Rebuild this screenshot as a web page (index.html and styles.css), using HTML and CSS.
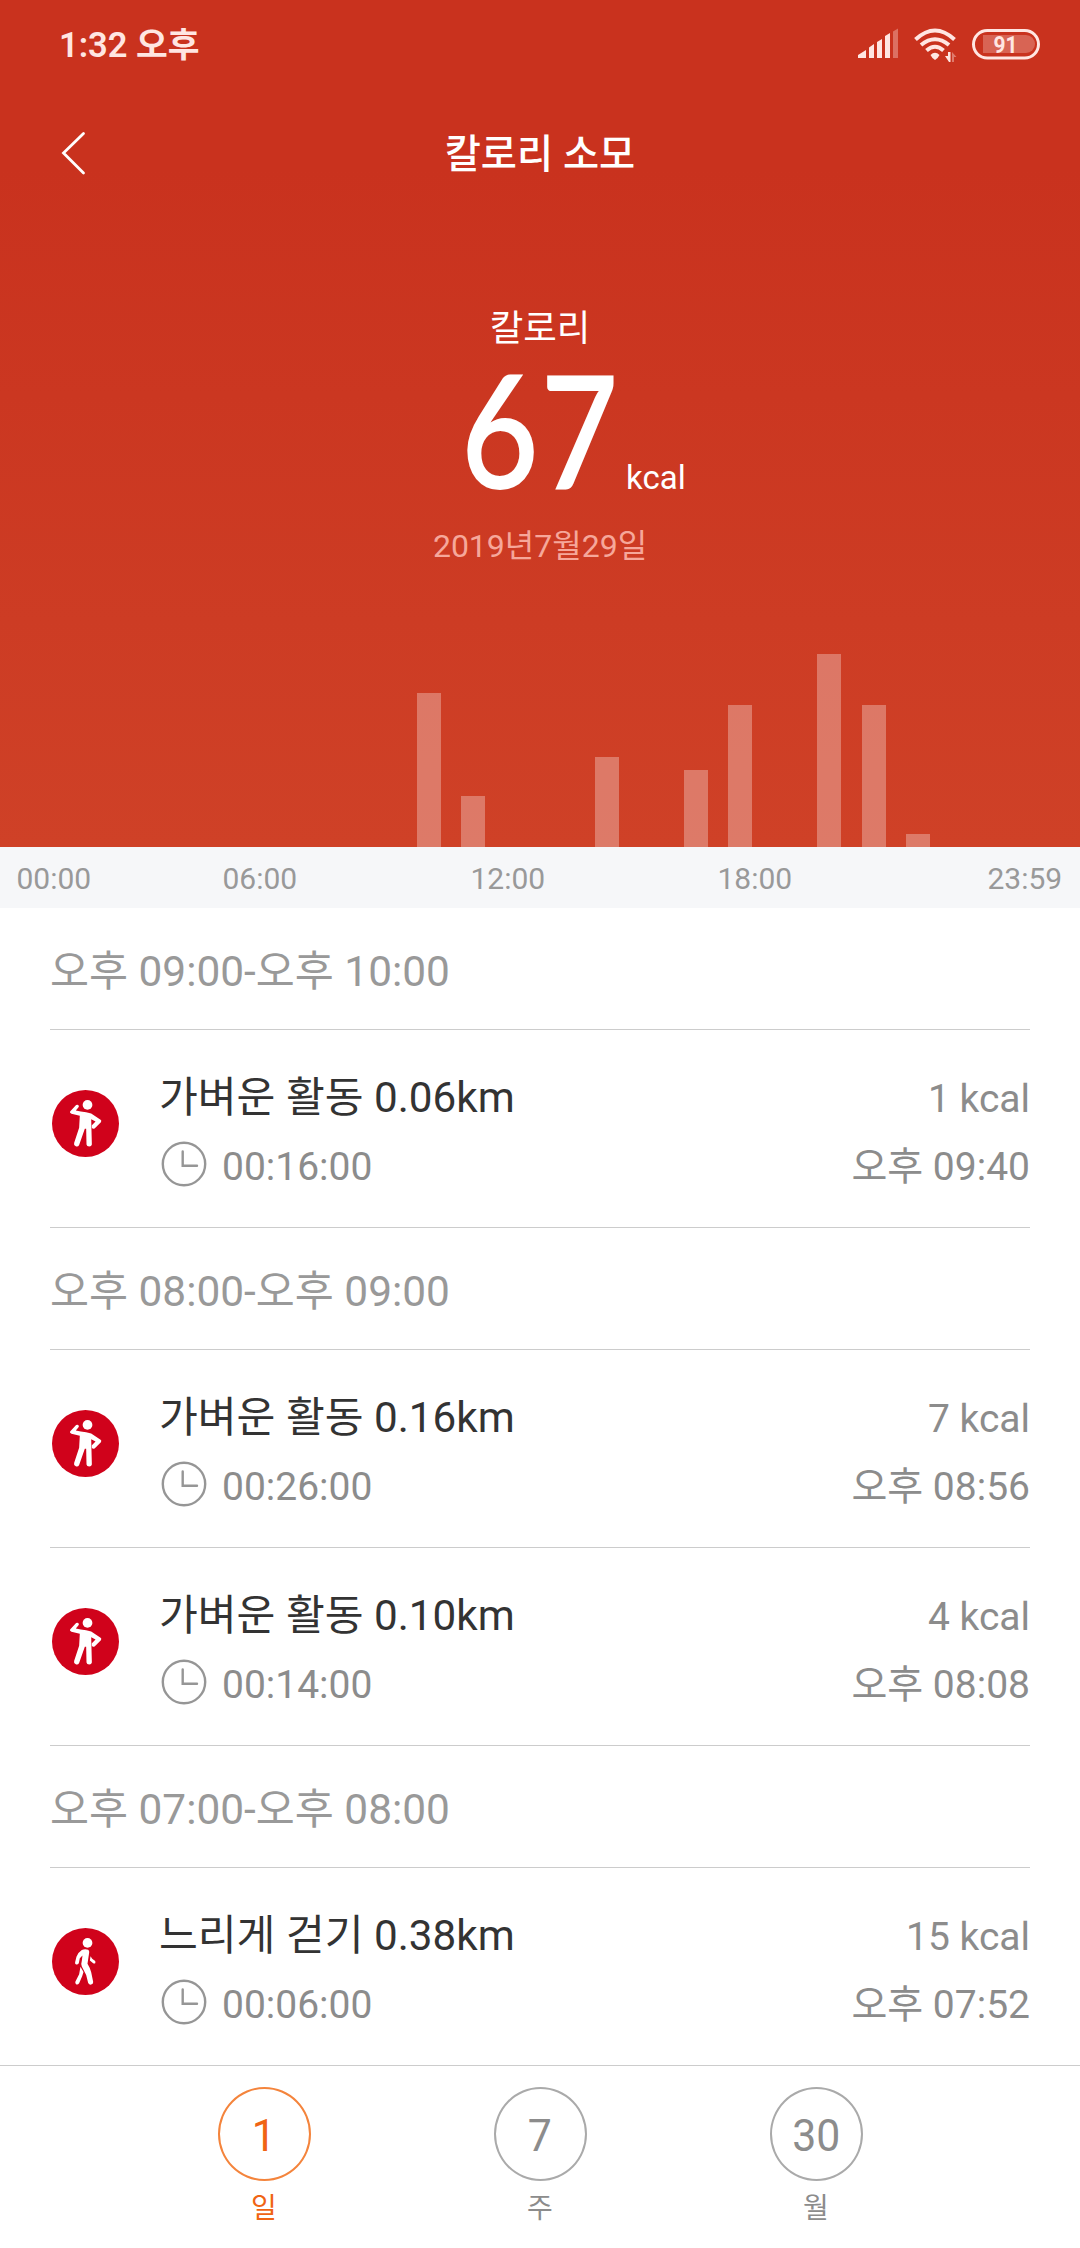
FILE: index.html
```html
<!DOCTYPE html>
<html lang="ko">
<head>
<meta charset="utf-8">
<title>칼로리 소모</title>
<link rel="stylesheet" href="styles.css">
</head>
<body>
<svg class="defs" width="0" height="0" aria-hidden="true">
  <symbol id="stand" viewBox="68 92 200 200">
    <circle cx="168" cy="192" r="100" fill="#d0021b"/>
    <circle cx="174" cy="136.500" r="14.500" fill="#fff"/>
    <path fill="#fff" d="M122 156L140 137Q145 134 148 139Q149 142 146 145L139 153L154 156Q170 157 185 162L213 181Q217 184 214 188L196 206Q190 210 187 205V197L198 186L185 179L187 255Q186 261 179 261Q172 261 171 255L170 208H166L149 256Q146 262 139 260Q132 257 134 250L149 205L151 169L126 163Q120 160 122 156Z"/>
  </symbol>
  <symbol id="walk" viewBox="68 86 200 200">
    <circle cx="168" cy="186" r="100" fill="#d0021b"/>
    <circle cx="174" cy="130.500" r="14.500" fill="#fff"/>
    <path fill="#fff" d="M157 152Q166 147 176 151Q180 154 179 159L174 193Q182 206 185 218L191 247Q191 254 185 255Q179 256 176 250L170 226L157 201Q154 193 157 184L159 168L151 176L148 191Q145 196 140 195Q136 194 137 188L141 172Q146 159 157 152Z"/>
    <path fill="#fff" d="M153 202L162 217L158 230L149 251Q145 256 140 254Q136 251 138 246L149 224ZM183 170L188 178L196 184Q199 187 197 191Q194 193 191 191L181 183Z"/>
  </symbol>
  <symbol id="clock" viewBox="0 0 46 46">
    <g fill="none" stroke="#969696" stroke-width="2.400" stroke-linecap="round"><circle cx="23" cy="23" r="21.200"/><path d="M21.700 10.500V24.700H36"/></g>
  </symbol>
</svg>
<div class="screen">
  <header class="hero">
    <div class="status">
      <span class="status-time">1:32 오후</span>
      <svg class="status-icons" viewBox="0 0 184 36" width="184" height="36">
        <g fill="#ffe6e2">
          <path d="M0 31V28L8 23V31ZM11 31V20.500L16 17V31ZM19 31V15L24 12V31ZM27 31V9L32 6V31Z"/>
          <path opacity=".35" d="M35 31V4.500L40 1.500V31Z"/>
          <path d="M72.500 28Q77 23.500 81.500 28Q80.500 30.500 77 33Q73.500 30.500 72.500 28Z"/>
          <path d="M87 29H90V25H92.500V35H91Z"/>
          <path opacity=".4" d="M94 25V35H96V30H98.500Z"/>
        </g>
        <g fill="none" stroke="#ffe6e2" stroke-width="4">
          <path d="M57.500 12.500Q77 -5.500 96.500 12.500M63 18Q77 6.500 91 18M68.500 23.500Q77 16 85.500 23.500"/>
        </g>
        <path d="M125 8H168A9 9 0 0 1 168 26H125Z" fill="#ffe6e2" opacity=".28"/>
        <rect x="115.500" y="3.500" width="65" height="27.500" rx="13.750" fill="none" stroke="#ffe6e2" stroke-width="3"/>
        <text class="battery-text" x="147.500" y="25.800" text-anchor="middle" textLength="24" lengthAdjust="spacingAndGlyphs">91</text>
      </svg>
    </div>
    <nav class="titlebar">
      <svg class="back" viewBox="0 0 26 44" width="26" height="44"><path d="M23.500 2.500L3.500 22L23.500 42" fill="none" stroke="#fff" stroke-width="2.800" stroke-linecap="round"/></svg>
      <h1>칼로리 소모</h1>
    </nav>
    <div class="label">칼로리</div>
    <div class="total"><span></span><b>67</b><span class="unit">kcal</span></div>
    <div class="date">2019년7월29일</div>
    <div class="chart">
      <i></i><i></i><i></i><i></i><i></i><i></i><i></i><i></i><i></i>
      <i style="height:154.500px"></i><i style="height:51.500px"></i><i></i><i></i>
      <i style="height:90px"></i><i></i><i style="height:77.300px"></i><i style="height:141.700px"></i><i></i>
      <i style="height:193px"></i><i style="height:141.700px"></i><i style="height:13px"></i><i></i><i></i><i></i>
    </div>
  </header>
  <div class="axis"><span>00:00</span><span>06:00</span><span>12:00</span><span>18:00</span><span>23:59</span></div>
  <main class="list">
    <h2>오후 09:00-오후 10:00</h2>
    <article class="row"><svg class="act"><use href="#stand"/></svg><div class="info"><div class="name">가벼운 활동 0.06km</div><div class="dur"><svg class="clock"><use href="#clock"/></svg>00:16:00</div></div><div class="meta"><div>1 kcal</div><div>오후 09:40</div></div></article>
    <h2>오후 08:00-오후 09:00</h2>
    <article class="row"><svg class="act"><use href="#stand"/></svg><div class="info"><div class="name">가벼운 활동 0.16km</div><div class="dur"><svg class="clock"><use href="#clock"/></svg>00:26:00</div></div><div class="meta"><div>7 kcal</div><div>오후 08:56</div></div></article>
    <article class="row"><svg class="act"><use href="#stand"/></svg><div class="info"><div class="name">가벼운 활동 0.10km</div><div class="dur"><svg class="clock"><use href="#clock"/></svg>00:14:00</div></div><div class="meta"><div>4 kcal</div><div>오후 08:08</div></div></article>
    <h2>오후 07:00-오후 08:00</h2>
    <article class="row last"><svg class="act"><use href="#walk"/></svg><div class="info"><div class="name">느리게 걷기 0.38km</div><div class="dur"><svg class="clock"><use href="#clock"/></svg>00:06:00</div></div><div class="meta"><div>15 kcal</div><div>오후 07:52</div></div></article>
  </main>
  <footer class="tabs">
    <div class="tab active"><div class="ring"><span>1</span></div>일</div>
    <div class="tab"><div class="ring"><span>7</span></div>주</div>
    <div class="tab"><div class="ring"><span>30</span></div>월</div>
  </footer>
</div>
</body>
</html>
```
FILE: styles.css
```css
* { box-sizing: border-box; }
body { margin: 0; font-family: Roboto, "Noto Sans CJK KR", sans-serif; background: #fff; }
h1, h2 { margin: 0; }
.defs { display: block; position: absolute; }
.screen { width: 1080px; height: 2248px; display: flex; flex-direction: column; overflow: hidden; }

.hero { height: 847px; display: flex; flex-direction: column; background: linear-gradient(#c9321e 20%, #cf4127); color: #fff; }
.status { height: 88px; display: flex; justify-content: space-between; align-items: center; padding: 1px 38px 0 59px; color: #ffe6e2; }
.status-time { padding-top: 1px; font-size: 34.500px; font-weight: 600; line-height: 40px; }
.battery-text { font: 700 24px Roboto, sans-serif; fill: #ffe6e2; }
.titlebar { height: 130px; display: grid; grid-template-columns: 60px 1fr 60px; align-items: center; padding: 0 60px; }
.titlebar h1 { padding-top: 4px; font-size: 39.300px; font-weight: 500; line-height: 60px; text-align: center; }
.label { margin-top: 83px; font-size: 36.500px; line-height: 56px; text-align: center; }
.total { height: 148px; display: grid; grid-template-columns: 1fr 160px 1fr; align-items: baseline; margin-top: -4px; }
.total b { font: 600 158px/150px Lato, sans-serif; letter-spacing: 2px; transform: translateX(-11px) scaleX(.85); }
.unit { font-size: 33px; padding-left: 6px; }
.date { margin-top: 20px; font-size: 32px; line-height: 50px; text-align: center; color: #f6a79a; }
.chart { flex: 1; display: grid; grid-template-columns: repeat(24, 1fr); align-items: end; justify-items: center; padding: 0 6px; }
.chart i { width: 23.700px; background: rgba(255, 255, 255, .3); }

.axis { height: 61px; display: grid; grid-template-columns: 206px 248px 247px 270px auto; padding-left: 16.500px; background: #f6f7f9; color: #999; font-size: 30px; line-height: 63px; }

.list { height: 1157px; padding: 0 50px; background: #fff; }
.list h2 { height: 122px; border-bottom: 1px solid #ccc; padding-top: 4px; font-size: 42.400px; font-weight: 400; line-height: 120px; color: #999; }
.row { height: 198px; display: flex; border-bottom: 1px solid #ccc; padding: 38px 0 0 2px; color: #8c8c8c; font-size: 39px; line-height: 60px; }
.row.last { border-bottom: 0; }
.act { width: 67px; height: 67px; margin: 22px 40px 0 0; }
.info { flex: 1; display: grid; gap: 9px; align-content: start; }
.name { color: #333; font-size: 42.200px; }
.dur { display: flex; align-items: center; }
.clock { width: 46px; height: 46px; margin: -6px 15px 0 2px; }
.meta { display: grid; gap: 8px; align-content: start; padding-top: 1px; text-align: right; }

.tabs { flex: 1; display: flex; justify-content: center; gap: 183px; border-top: 1px solid #ccc; padding-top: 21px; color: #8c8c8c; }
.tab { width: 93px; font-size: 28px; line-height: 56px; text-align: center; }
.ring { height: 94px; display: grid; place-items: center; border: 2px solid #aaa; border-radius: 50%; }
.ring span { padding-top: 3px; font: 400 45px Roboto, sans-serif; transform: scaleX(.95); }
.tab.active { color: #f06414; }
.tab.active .ring { border-color: #f4843c; }
```
